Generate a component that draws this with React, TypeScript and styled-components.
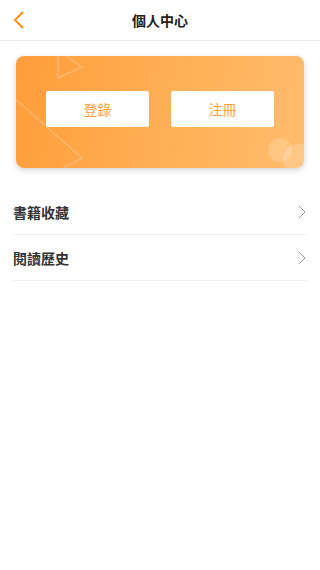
import React from "react";
import styled, { createGlobalStyle } from "styled-components";

const GlobalStyle = createGlobalStyle`
  html, body {
    margin: 0;
    padding: 0;
    background: #fff;
    font-family: "Noto Sans CJK TC", "Noto Sans", sans-serif;
  }
`;

const Page = styled.div`
  width: 320px;
  min-height: 570px;
  background: #fff;
`;

const Header = styled.header`
  position: relative;
  height: 40px;
  display: flex;
  align-items: center;
  justify-content: center;
  border-bottom: 1px solid #e8e8e8;
`;

const BackButton = styled.button`
  position: absolute;
  left: 8px;
  top: 8px;
  width: 22px;
  height: 24px;
  padding: 0;
  border: none;
  background: none;
  display: flex;
  align-items: center;
  justify-content: center;
`;

const Title = styled.h1`
  margin: 0;
  font-size: 14px;
  font-weight: 700;
  color: #222;
`;

const Card = styled.div`
  position: relative;
  overflow: hidden;
  margin: 15px 16px 0;
  height: 112px;
  border-radius: 8px;
  background: linear-gradient(100deg, #ff9d3b 0%, #ffb258 60%, #ffbc6d 100%);
  box-shadow: 0 2px 6px rgba(0, 0, 0, 0.18);
  display: flex;
  justify-content: center;
  padding-top: 35px;
  box-sizing: border-box;
  gap: 22px;
`;

const Decor = styled.svg`
  position: absolute;
  inset: 0;
  width: 100%;
  height: 100%;
`;

const AuthButton = styled.button`
  position: relative;
  width: 103px;
  height: 36px;
  border: none;
  border-radius: 2px;
  background: #fff;
  color: #ff9d3b;
  font-family: inherit;
  font-size: 14px;
`;

const List = styled.ul`
  list-style: none;
  margin: 21px 13px 0;
  padding: 0;
`;

const Row = styled.li`
  height: 45px;
  display: flex;
  align-items: center;
  justify-content: space-between;
  border-bottom: 1px solid #f0f0f0;
  font-size: 14px;
  font-weight: 700;
  color: #333;
  padding-right: 1px;
`;

const Chevron = () => (
  <svg width="8" height="14" viewBox="0 0 8 14">
    <path d="M1 1l6 6-6 6" fill="none" stroke="#999" strokeWidth="1" />
  </svg>
);

export default function App() {
  return (
    <Page>
      <GlobalStyle />
      <Header>
        <BackButton>
          <svg width="12" height="20" viewBox="0 0 12 20">
            <path d="M10 2L2 10l8 8" fill="none" stroke="#ff8c1a" strokeWidth="2" />
          </svg>
        </BackButton>
        <Title>個人中心</Title>
      </Header>
      <Card>
        <Decor viewBox="0 0 288 112">
          <path d="M42 -6v28l24 -11z" fill="none" stroke="rgba(255,255,255,0.22)" strokeWidth="1.5" />
          <path d="M-10 35L66 102 40 116" fill="none" stroke="rgba(255,255,255,0.22)" strokeWidth="1.5" />
          <circle cx="264" cy="94" r="12" fill="rgba(255,255,255,0.18)" />
          <circle cx="282" cy="103" r="15" fill="rgba(255,255,255,0.18)" />
        </Decor>
        <AuthButton>登錄</AuthButton>
        <AuthButton>注冊</AuthButton>
      </Card>
      <List>
        <Row>
          書籍收藏
          <Chevron />
        </Row>
        <Row>
          閱讀歷史
          <Chevron />
        </Row>
      </List>
    </Page>
  );
}
